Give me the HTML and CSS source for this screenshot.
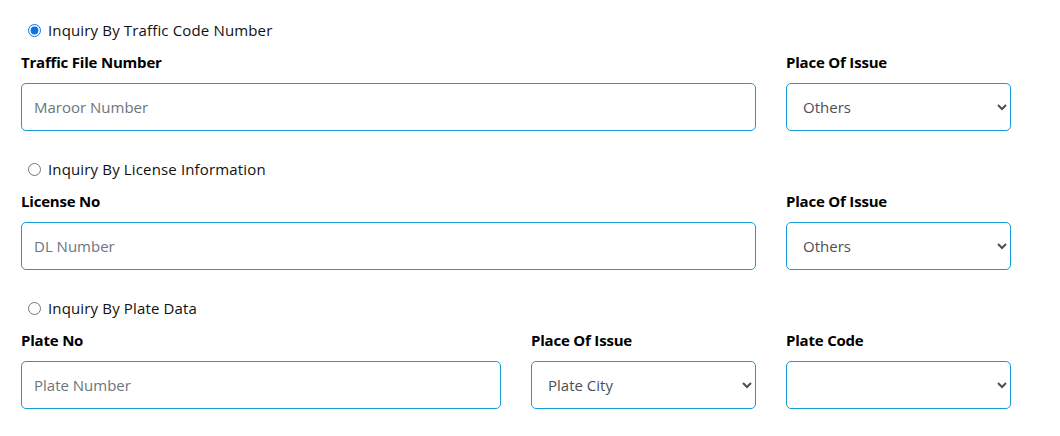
FILE: index.html
```html
<!DOCTYPE html>
<html>
<head>
<meta charset="utf-8">
<link rel="stylesheet" href="styles.css">
</head>
<body>
<form class="inquiry">
  <section class="block">
    <label class="choice"><input type="radio" name="mode" checked> <span>Inquiry By Traffic Code Number</span></label>
    <div class="grid">
      <div class="field span3">
        <label class="title">Traffic File Number</label>
        <input class="control" type="text" placeholder="Maroor Number">
      </div>
      <div class="field">
        <label class="title">Place Of Issue</label>
        <select class="control"><option>Others</option></select>
      </div>
    </div>
  </section>
  <section class="block">
    <label class="choice"><input type="radio" name="mode"> <span>Inquiry By License Information</span></label>
    <div class="grid">
      <div class="field span3">
        <label class="title">License No</label>
        <input class="control" type="text" placeholder="DL Number">
      </div>
      <div class="field">
        <label class="title">Place Of Issue</label>
        <select class="control"><option>Others</option></select>
      </div>
    </div>
  </section>
  <section class="block">
    <label class="choice"><input type="radio" name="mode"> <span>Inquiry By Plate Data</span></label>
    <div class="grid">
      <div class="field span2">
        <label class="title">Plate No</label>
        <input class="control" type="text" placeholder="Plate Number">
      </div>
      <div class="field">
        <label class="title">Place Of Issue</label>
        <select class="control"><option>Plate City</option></select>
      </div>
      <div class="field">
        <label class="title">Plate Code</label>
        <select class="control"><option></option></select>
      </div>
    </div>
  </section>
</form>
</body>
</html>
```
FILE: styles.css
```css
* { box-sizing: border-box; }
html, body { margin: 0; background: #fff; }
body {
  font-family: "Open Sans", "Noto Sans", sans-serif;
  color: #111;
  padding: 21px 49px 0 21px;
}
.inquiry { width: 990px; display: flex; flex-direction: column; gap: 29px; }
.block { display: flex; flex-direction: column; }
.choice {
  display: flex; align-items: center; gap: 7px;
  height: 18px; padding-left: 7px;
  font-size: 15px; color: #111; letter-spacing: 0.15px;
}
.choice input { margin: 0; width: 13px; height: 13px; accent-color: #0b73e4; }
.grid {
  display: grid;
  grid-template-columns: repeat(4, 225px);
  column-gap: 30px;
  margin-top: 14px;
}
.span3 { grid-column: span 3; }
.span2 { grid-column: span 2; }
.field { display: flex; flex-direction: column; }
.title {
  font-size: 15px; font-weight: 700; color: #000; letter-spacing: -0.2px;
  height: 18px; line-height: 18px; margin-bottom: 12px;
}
.control {
  height: 48px; width: 100%;
  border: 1px solid #1a9ad6; border-radius: 5px;
  padding: 0 12px;
  font-family: inherit; font-size: 15px; color: #495057;
  background: #fff;
}
.control::placeholder { color: #6c757d; }
select.control { padding-left: 12px; }
```
